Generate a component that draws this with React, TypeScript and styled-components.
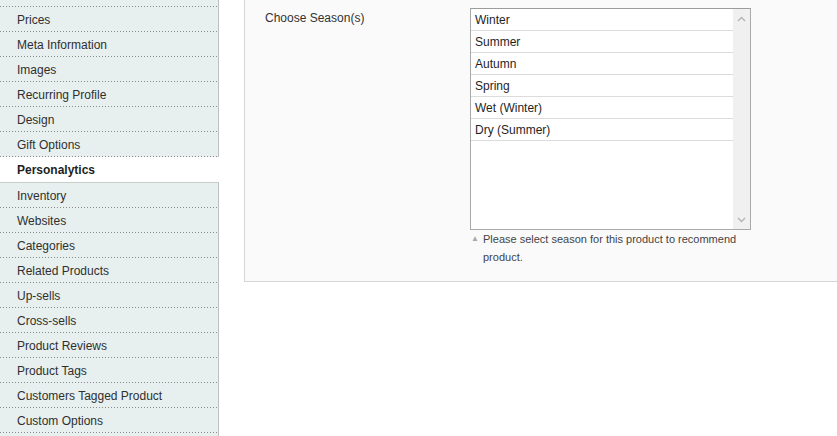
import React from "react";
import styled, { createGlobalStyle, css } from "styled-components";

const Global = createGlobalStyle`
  html, body {
    margin: 0;
    padding: 0;
    overflow: hidden;
    background: #ffffff;
    font-family: "Liberation Sans", Arial, sans-serif;
  }
`;

const Page = styled.div`
  display: flex;
  height: 436px;
  overflow: hidden;
`;

const Sidebar = styled.nav`
  width: 219px;
  flex-shrink: 0;
  display: flex;
  flex-direction: column;
`;

const dotted = css`
  background-image: repeating-linear-gradient(
    to right,
    #8c8c8c 0 1px,
    transparent 1px 3px
  );
  background-size: 100% 1px;
  background-position: left bottom;
  background-repeat: no-repeat;
`;

const Tab = styled.div<{ $active?: boolean }>`
  box-sizing: border-box;
  height: ${(p) => (p.$active ? "26px" : "25px")};
  padding: 1px 0 0 17px;
  display: flex;
  align-items: center;
  font-size: 12px;
  color: #2f2f2f;
  ${(p) =>
    p.$active
      ? css`
          background-color: #ffffff;
          font-weight: bold;
          color: #1e1e1e;
          border-bottom: 1px solid #c7cccc;
        `
      : css`
          background-color: #e7efef;
          border-right: 1px solid #b9c0c0;
          ${dotted}
        `}
`;

const TabStub = styled.div<{ $fill?: boolean }>`
  box-sizing: border-box;
  background-color: #e7efef;
  border-right: 1px solid #b9c0c0;
  ${(p) =>
    p.$fill
      ? css`
          flex: 1;
        `
      : css`
          height: 7px;
          ${dotted}
        `}
`;

const Main = styled.main`
  flex: 1;
  padding-left: 25px;
  display: flex;
  align-items: flex-start;
`;

const Fieldset = styled.section`
  flex: 1;
  box-sizing: border-box;
  height: 282px;
  background: #fafafa;
  border-left: 1px solid #d6d6d6;
  border-bottom: 1px solid #d6d6d6;
  padding: 8px 0 0 20px;
  display: grid;
  grid-template-columns: 205px 281px;
  align-items: start;
`;

const Label = styled.label`
  font-size: 12px;
  line-height: 20px;
  color: #333333;
`;

const Control = styled.div`
  display: flex;
  flex-direction: column;
`;

const MultiSelect = styled.div`
  box-sizing: border-box;
  width: 281px;
  height: 222px;
  background: #ffffff;
  border: 1px solid #a9a9a9;
  border-top-color: #9c9c9c;
  display: flex;
`;

const OptionList = styled.ul`
  list-style: none;
  margin: 0;
  padding: 0;
  flex: 1;
`;

const Option = styled.li`
  box-sizing: border-box;
  height: 22px;
  border-bottom: 1px solid #dcdcdc;
  padding: 1px 0 0 4px;
  font-size: 12px;
  line-height: 20px;
  color: #1f1f1f;
`;

const ScrollTrack = styled.div`
  width: 17px;
  background: #f0f0f0;
  display: flex;
  flex-direction: column;
  justify-content: space-between;
  align-items: center;
  padding: 7px 0 6px;
  box-sizing: border-box;
`;

const Note = styled.p`
  margin: 0;
  display: flex;
  font-size: 11px;
  line-height: 18px;
  color: #444444;
`;

const NoteMarker = styled.span`
  flex: 0 0 13px;
  font-size: 8px;
  line-height: 18px;
  color: #a8a8a8;
  padding-left: 1px;
  box-sizing: border-box;
`;

const Chevron = ({ up }: { up?: boolean }) => (
  <svg width="9" height="6" viewBox="0 0 9 6" aria-hidden="true">
    <polyline
      points={up ? "1,5 4.5,1.5 8,5" : "1,1 4.5,4.5 8,1"}
      fill="none"
      stroke="#b4b4b4"
      strokeWidth="1.4"
    />
  </svg>
);

const tabsBefore = [
  "Prices",
  "Meta Information",
  "Images",
  "Recurring Profile",
  "Design",
  "Gift Options",
];

const tabsAfter = [
  "Inventory",
  "Websites",
  "Categories",
  "Related Products",
  "Up-sells",
  "Cross-sells",
  "Product Reviews",
  "Product Tags",
  "Customers Tagged Product",
  "Custom Options",
];

const seasons = [
  "Winter",
  "Summer",
  "Autumn",
  "Spring",
  "Wet (Winter)",
  "Dry (Summer)",
];

export default function App() {
  return (
    <>
      <Global />
      <Page>
        <Sidebar>
          <TabStub />
          {tabsBefore.map((t) => (
            <Tab key={t}>{t}</Tab>
          ))}
          <Tab $active>Personalytics</Tab>
          {tabsAfter.map((t) => (
            <Tab key={t}>{t}</Tab>
          ))}
          <TabStub $fill />
        </Sidebar>
        <Main>
          <Fieldset>
            <Label>Choose Season(s)</Label>
            <Control>
              <MultiSelect>
                <OptionList>
                  {seasons.map((s) => (
                    <Option key={s}>{s}</Option>
                  ))}
                </OptionList>
                <ScrollTrack>
                  <Chevron up />
                  <Chevron />
                </ScrollTrack>
              </MultiSelect>
              <Note>
                <NoteMarker>▲</NoteMarker>
                <span>
                  Please select season for this product to recommend product.
                </span>
              </Note>
            </Control>
          </Fieldset>
        </Main>
      </Page>
    </>
  );
}
